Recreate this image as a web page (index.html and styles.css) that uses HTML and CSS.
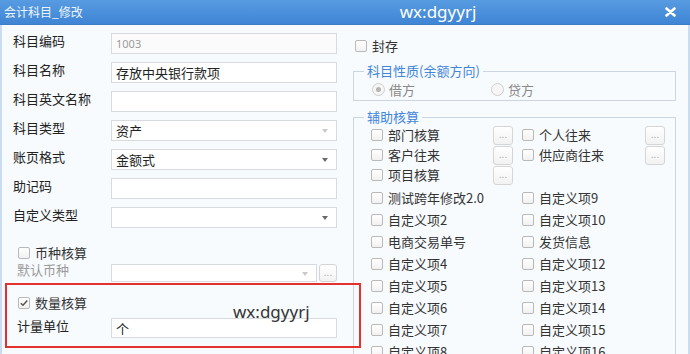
FILE: index.html
```html
<!DOCTYPE html>
<html>
<head>
    <meta charset="utf-8">
    <title>会计科目_修改</title>
    <link rel="stylesheet" href="styles.css">
</head>
<body>
    <div class="window">
        <div class="titlebar">
            <span class="title">会计科目_修改</span>
            <span class="brand">wx:dgyyrj</span>
            <span class="close">
                <svg width="11" height="10" viewBox="0 0 11 10"><path d="M1.5 1.5 L9.5 8.5 M9.5 1.5 L1.5 8.5" stroke="#fff" stroke-width="2.6" stroke-linecap="round"/></svg>
            </span>
        </div>
        <div class="content">
            <div class="left">
                <div class="form-row">
                    <span class="label">科目编码</span>
                    <div class="field disabled small">1003</div>
                </div>
                <div class="form-row">
                    <span class="label">科目名称</span>
                    <div class="field">存放中央银行款项</div>
                </div>
                <div class="form-row">
                    <span class="label">科目英文名称</span>
                    <div class="field"></div>
                </div>
                <div class="form-row">
                    <span class="label">科目类型</span>
                    <div class="field select disabled-arrow">资产<span class="arrow"></span></div>
                </div>
                <div class="form-row">
                    <span class="label">账页格式</span>
                    <div class="field select">金额式<span class="arrow"></span></div>
                </div>
                <div class="form-row">
                    <span class="label">助记码</span>
                    <div class="field"></div>
                </div>
                <div class="form-row">
                    <span class="label">自定义类型</span>
                    <div class="field select"><span class="arrow"></span></div>
                </div>

                <div class="sub">
                    <label class="check check-row currency"><span class="box"></span>币种核算</label>
                    <div class="sub-row currency-row">
                        <span class="label muted">默认币种</span>
                        <div class="field select disabled-arrow short"><span class="arrow"></span></div>
                        <span class="dots">...</span>
                    </div>
                    <label class="check check-row quantity"><span class="box checked"><svg width="10" height="10" viewBox="0 0 10 10"><path d="M1.8 5.2 L4 7.3 L8.3 2.6" fill="none" stroke="#555" stroke-width="1.5"/></svg></span>数量核算</label>
                    <div class="sub-row unit-row">
                        <span class="label">计量单位</span>
                        <div class="field">个</div>
                    </div>
                    <div class="check-row last"><span class="box"></span></div>
                </div>
            </div>

            <div class="right">
                <label class="check seal"><span class="box"></span>封存</label>

                <fieldset class="group nature">
                    <legend>科目性质(余额方向)</legend>
                    <div class="radios">
                        <span class="radio-item"><span class="radio on"></span>借方</span>
                        <span class="radio-item"><span class="radio"></span>贷方</span>
                    </div>
                </fieldset>

                <fieldset class="group assist">
                    <legend>辅助核算</legend>
                    <div class="assist-top">
                        <div class="assist-item"><label class="check"><span class="box"></span>部门核算</label><span class="dots">...</span></div>
                        <div class="assist-item"><label class="check"><span class="box"></span>个人往来</label><span class="dots">...</span></div>
                        <div class="assist-item"><label class="check"><span class="box"></span>客户往来</label><span class="dots">...</span></div>
                        <div class="assist-item"><label class="check"><span class="box"></span>供应商往来</label><span class="dots">...</span></div>
                        <div class="assist-item"><label class="check"><span class="box"></span>项目核算</label><span class="dots">...</span></div>
                    </div>
                    <div class="assist-list">
                        <label class="check"><span class="box"></span>测试跨年修改2.0</label>
                        <label class="check"><span class="box"></span>自定义项9</label>
                        <label class="check"><span class="box"></span>自定义项2</label>
                        <label class="check"><span class="box"></span>自定义项10</label>
                        <label class="check"><span class="box"></span>电商交易单号</label>
                        <label class="check"><span class="box"></span>发货信息</label>
                        <label class="check"><span class="box"></span>自定义项4</label>
                        <label class="check"><span class="box"></span>自定义项12</label>
                        <label class="check"><span class="box"></span>自定义项5</label>
                        <label class="check"><span class="box"></span>自定义项13</label>
                        <label class="check"><span class="box"></span>自定义项6</label>
                        <label class="check"><span class="box"></span>自定义项14</label>
                        <label class="check"><span class="box"></span>自定义项7</label>
                        <label class="check"><span class="box"></span>自定义项15</label>
                        <label class="check"><span class="box"></span>自定义项8</label>
                        <label class="check"><span class="box"></span>自定义项16</label>
                    </div>
                </fieldset>
            </div>
        </div>

        <div class="highlight"></div>
        <div class="watermark">wx:dgyyrj</div>
    </div>
</body>
</html>
```

FILE: styles.css
```css
body {
    margin: 0;
    font-family: "Noto Sans CJK SC", "Noto Sans", sans-serif;
    font-size: 13px;
    color: #222;
}
.window {
    position: relative;
    width: 690px;
    height: 354px;
    overflow: hidden;
    background: #f8fbfe;
    box-shadow: inset 2px 0 #c9dcf1, inset -2px 0 #c9dcf1;
}
.titlebar {
    display: flex;
    align-items: center;
    height: 25px;
    padding-left: 4px;
    background: linear-gradient(#579be1, #3f85d5);
    border-bottom: 1px solid #3b7bc8;
    box-sizing: border-box;
    color: #fff;
}
.title {
    font-size: 12px;
    line-height: 16px;
    color: #eef4fc;
}
.brand {
    margin-left: 317px;
    font-family: "Noto Sans", sans-serif;
    font-size: 17px;
    line-height: 20px;
    margin-top: -1px;
}
.close {
    display: flex;
    margin-left: auto;
    margin-right: 14px;
}
.content {
    display: flex;
    padding-top: 4px;
}
.left {
    width: 345px;
    flex: none;
    padding-left: 13px;
    box-sizing: border-box;
}
.form-row {
    display: grid;
    grid-template-columns: 98px 226px;
    align-items: center;
    height: 29px;
}
.label {
    line-height: 16px;
    padding-bottom: 5px;
    white-space: nowrap;
}
.muted {
    color: #9a9a9a;
}
.field {
    position: relative;
    height: 21px;
    line-height: 19px;
    padding: 0 4px;
    border: 1px solid #d7dadf;
    background: #fff;
    box-sizing: border-box;
    white-space: nowrap;
}
.field.disabled {
    background: #fbfbfb;
    color: #999;
}
.field.small {
    font-family: "Noto Sans", sans-serif;
    font-size: 11px;
}
.arrow {
    position: absolute;
    right: 8px;
    top: 8px;
    border-left: 3.5px solid transparent;
    border-right: 3.5px solid transparent;
    border-top: 4px solid #6a6a6a;
}
.disabled-arrow .arrow {
    border-top-color: #c9c9c9;
}
.sub {
    padding-top: 11px;
}
.check {
    display: flex;
    align-items: center;
    gap: 5px;
    line-height: 16px;
    white-space: nowrap;
    color: #333;
}
.box {
    display: flex;
    align-items: center;
    justify-content: center;
    width: 12px;
    height: 12px;
    border: 1px solid #b9b9b9;
    border-radius: 2px;
    background: linear-gradient(#fff, #f1f1f1);
    box-sizing: border-box;
    flex: none;
}
.check-row {
    height: 20px;
    padding-left: 5px;
}
.sub-row {
    display: flex;
    align-items: center;
}
.sub-row .label {
    width: 94px;
    padding-left: 4px;
}
.currency-row {
    height: 19px;
}
.currency-row .field {
    width: 206px;
    height: 18px;
}
.currency-row .arrow {
    top: 7px;
}
.currency-row .dots {
    margin-left: 2px;
}
.quantity {
    margin-top: 11px;
}
.unit-row {
    margin-top: 5px;
    height: 20px;
}
.unit-row .field {
    width: 226px;
    height: 20px;
}
.last {
    display: flex;
    align-items: center;
    margin-top: 13px;
}
.dots {
    display: flex;
    justify-content: center;
    width: 18px;
    height: 18px;
    line-height: 14px;
    font-size: 10px;
    color: #b0b0b0;
    border: 1px solid #d5d5d5;
    border-radius: 3px;
    background: linear-gradient(#fff, #f2f2f2);
    box-sizing: border-box;
    flex: none;
}
.right {
    width: 323px;
    margin-left: 8px;
}
.seal {
    height: 16px;
    margin-top: 9px;
    padding-left: 2px;
}
.group {
    margin: 0;
    padding: 0;
    border: 1px solid #cbd6e2;
    min-width: 0;
}
.group legend {
    margin-left: 10px;
    padding: 0 3px;
    line-height: 18px;
    color: #4285dc;
}
.nature {
    margin-top: 8px;
    padding-bottom: 2px;
}
.radios {
    display: flex;
    height: 18px;
    align-items: center;
    padding-left: 18px;
}
.radio-item {
    display: flex;
    align-items: center;
    gap: 4px;
    width: 119px;
    color: #8a8a8a;
}
.radio {
    display: flex;
    align-items: center;
    justify-content: center;
    width: 13px;
    height: 13px;
    border: 1px solid #cfcfcf;
    border-radius: 50%;
    background: #f6f6f6;
    box-sizing: border-box;
}
.radio.on::after {
    content: "";
    width: 5px;
    height: 5px;
    border-radius: 50%;
    background: #b4b4b4;
}
.assist {
    margin-top: 7px;
    height: 260px;
}
.assist-top {
    display: grid;
    grid-template-columns: 142px 143px;
    column-gap: 9px;
    grid-auto-rows: 20px;
    margin-top: -1px;
    padding-left: 17px;
}
.assist-item {
    display: flex;
    align-items: center;
    justify-content: space-between;
}
.assist-item .dots {
    width: 20px;
    height: 19px;
}
.assist-list {
    display: grid;
    grid-template-columns: 151px 143px;
    grid-auto-rows: 22px;
    align-items: center;
    margin-top: 2px;
    padding-left: 17px;
}
.highlight {
    position: absolute;
    left: 5px;
    top: 283px;
    width: 356px;
    height: 65px;
    border: 2px solid #e3312e;
    box-sizing: border-box;
}
.watermark {
    position: absolute;
    left: 233px;
    top: 302px;
    font-family: "Noto Sans", sans-serif;
    font-size: 17px;
    line-height: 20px;
    color: #333;
}
```
